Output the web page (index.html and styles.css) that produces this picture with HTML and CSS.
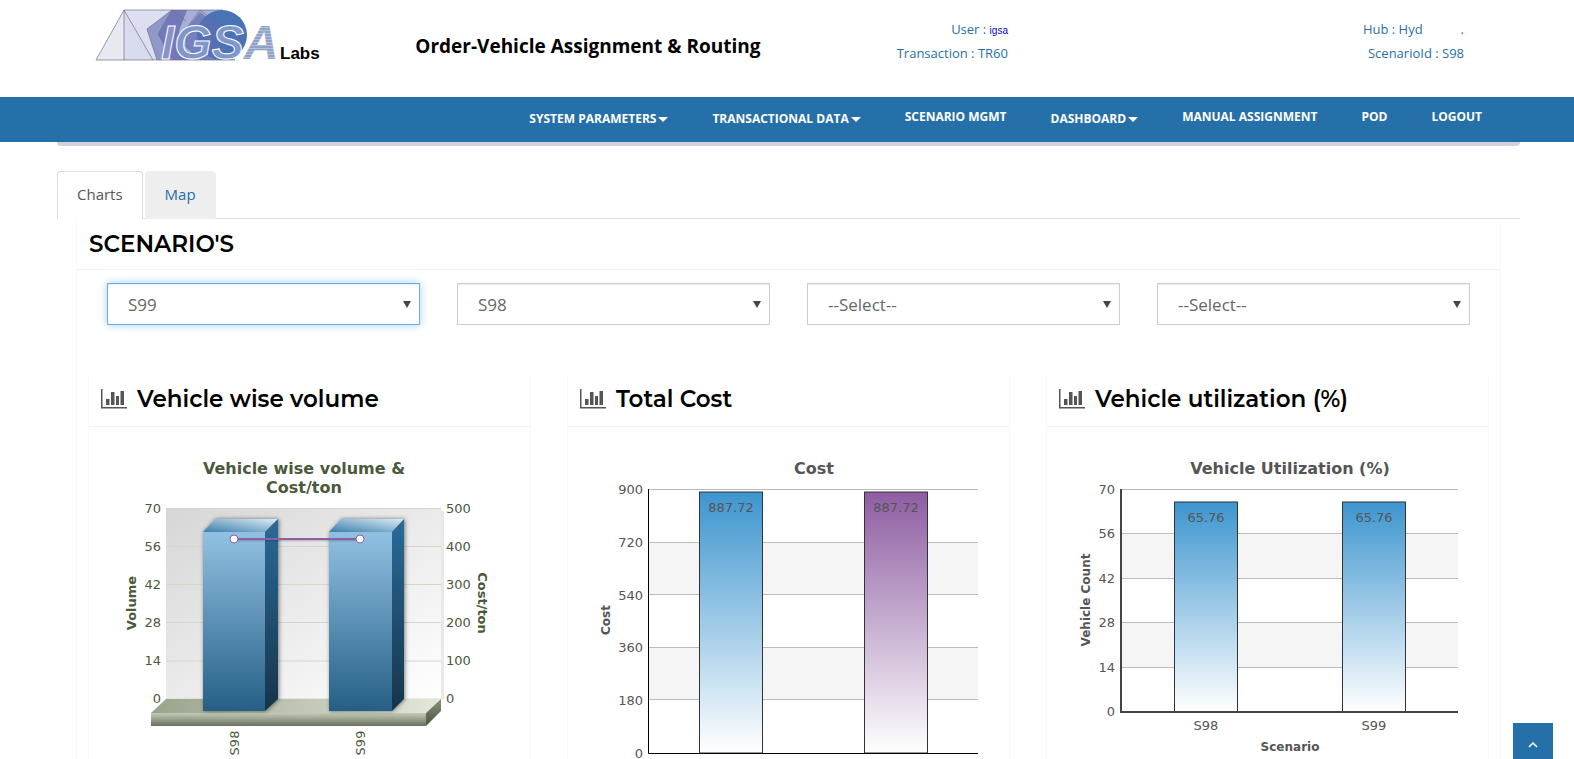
FILE: index.html
```html
<!DOCTYPE html>
<html lang="en">
<head>
    <meta charset="UTF-8">
    <meta name="viewport" content="width=device-width, initial-scale=1.0">
    <title>Order-Vehicle Assignment &amp; Routing</title>
    <link rel="stylesheet" href="styles.css">
</head>
<body>

    <!-- Header -->
    <header class="header">
        <a href="#" class="logo">
            <svg width="230" height="64" viewBox="0 0 230 64">
                <defs>
                    <pattern id="stripes" width="4" height="3" patternUnits="userSpaceOnUse">
                        <rect width="4" height="3" fill="#8fa3c6"/>
                        <rect width="4" height="1" fill="#b4c1d9"/>
                    </pattern>
                </defs>
                <path d="M29 1H128V51H29z" fill="#dddff0"/>
                <path d="M29 1L1 51H29z" fill="#e6e9f1"/>
                <path d="M29 1L58 51H29z" fill="#d8daed"/>
                <path d="M77 1L52 20L62 51H102L110 20z" fill="#8f98c9"/>
                <path d="M77 1H106L86 20L92 51H78L63 25z" fill="#7379b8"/>
                <path d="M92 1H128L140 20V51H92L84 22z" fill="#a9aed6"/>
                <circle cx="127" cy="26" r="25" fill="#4a73b5"/>
                <path d="M105 3L128 21L124 51H106L91 38V20z" fill="#5c6fb4" opacity=".7"/>
                <path d="M29 1V51M1 51L29 1L58 51M29 1H128M77 1L52 20L62 51M77 1L63 25L78 51M77 1L91 12M105 1L91 20V38L106 51M105 1L128 20V40L118 51M1 51H140" fill="none" stroke="#6d7186" stroke-width=".7"/>
                <text x="66" y="50" class="logo-name"><tspan fill="#8891c8">I</tspan><tspan fill="#8097cb">GS</tspan><tspan class="logo-stripe">A</tspan></text>
                <text x="185" y="50" class="logo-labs">Labs</text>
            </svg>
        </a>
        <h1 class="title">Order-Vehicle Assignment &amp; Routing</h1>
        <div class="info">
            <div>User : <span class="user-name">igsa</span></div>
            <div>Transaction : TR60</div>
        </div>
        <div class="info">
            <div>Hub : Hyd <span class="hub-rest">.</span></div>
            <div>ScenarioId : S98</div>
        </div>
    </header>

    <!-- Navigation -->
    <nav class="navbar">
        <a href="#" class="dropdown">System Parameters<span class="caret"></span></a>
        <a href="#" class="dropdown">Transactional Data<span class="caret"></span></a>
        <a href="#">Scenario Mgmt</a>
        <a href="#" class="dropdown">Dashboard<span class="caret"></span></a>
        <a href="#">Manual Assignment</a>
        <a href="#">POD</a>
        <a href="#">Logout</a>
    </nav>

    <main class="container">
        <div class="strip"></div>

        <div class="tabs">
            <a href="#" class="tab active">Charts</a>
            <a href="#" class="tab">Map</a>
        </div>

        <section class="panel">
            <h2 class="panel-title" id="scenarios">SCENARIO'S</h2>

            <div class="selects">
                <div class="select-box">
                    <select class="selected" aria-labelledby="scenarios"><option>S99</option></select>
                </div>
                <div class="select-box">
                    <select aria-labelledby="scenarios"><option>S98</option></select>
                </div>
                <div class="select-box">
                    <select aria-labelledby="scenarios"><option>--Select--</option></select>
                </div>
                <div class="select-box">
                    <select aria-labelledby="scenarios"><option>--Select--</option></select>
                </div>
            </div>

            <div class="cards">
                <!-- Volume chart -->
                <article class="card">
                    <h3 class="card-title">
                        <svg class="icon" width="26" height="20" viewBox="0 0 26 20"><path d="M0 0h1.500v18H26v1.500H0zM5 10h3.500v6H5zM10 3h3.500v13H10zM15 7h3v9h-3zM19.500 2h3.500v14h-3.500z"/></svg>
                        Vehicle wise volume
                    </h3>
                    <svg class="chart green" viewBox="0 0 441 332">
                        <defs>
                            <linearGradient id="wall" x1="0" y1="0" x2="1" y2="1">
                                <stop offset="0" stop-color="#d6d6d6"/>
                                <stop offset="1" stop-color="#fff"/>
                            </linearGradient>
                            <linearGradient id="front" x1="0" y1="0" x2="0" y2="1">
                                <stop offset="0" stop-color="#91c1e2"/>
                                <stop offset="1" stop-color="#265f86"/>
                            </linearGradient>
                            <linearGradient id="side" x1="0" y1="0" x2="0" y2="1">
                                <stop offset="0" stop-color="#2a6b98"/>
                                <stop offset="1" stop-color="#17344a"/>
                            </linearGradient>
                            <linearGradient id="top" x1="0" y1="1" x2="1" y2="0">
                                <stop offset="0" stop-color="#3a7da8"/>
                                <stop offset="1" stop-color="#dcedf9"/>
                            </linearGradient>
                            <linearGradient id="floor" x1="0" y1="0" x2="1" y2="0">
                                <stop offset="0" stop-color="#9aa38c"/>
                                <stop offset="1" stop-color="#e3e8dd"/>
                            </linearGradient>
                            <linearGradient id="floorFront" x1="0" y1="0" x2="0" y2="1">
                                <stop offset="0" stop-color="#c3cab8"/>
                                <stop offset="1" stop-color="#697260"/>
                            </linearGradient>
                            <linearGradient id="floorSide" x1="0" y1="0" x2="0" y2="1">
                                <stop offset="0" stop-color="#8a9479"/>
                                <stop offset="1" stop-color="#4b5242"/>
                            </linearGradient>
                            <filter id="shadow" x="-20%" y="-10%" width="150%" height="120%">
                                <feDropShadow dx="1" dy="0" stdDeviation="2" flood-opacity=".5"/>
                            </filter>
                        </defs>
                        <text class="chart-title" x="215" y="47">Vehicle wise volume &amp;</text>
                        <text class="chart-title" x="215" y="66">Cost/ton</text>

                        <path d="M351 81l4 4v187h-4z" fill="#e9e9e9"/>
                        <rect x="77" y="81" width="275" height="191" fill="url(#wall)"/>
                        <path d="M77 81.500H352M77 119.500H352M77 157.500H352M77 195.500H352M77 234H352M77 272H352" stroke="#d3d8c6" fill="none"/>
                        <path d="M62 286L77 272H352L337 286z" fill="url(#floor)"/>
                        <path d="M337 286L352 272V284L337 299z" fill="url(#floorSide)"/>
                        <rect x="62" y="286" width="275" height="13" fill="url(#floorFront)"/>

                        <g filter="url(#shadow)">
                            <path d="M114 105L126 92H189L176 105z" fill="url(#top)"/>
                            <path d="M176 105L189 92V272L176 284z" fill="url(#side)"/>
                            <rect x="114" y="105" width="62" height="179" fill="url(#front)"/>
                        </g>
                        <g filter="url(#shadow)">
                            <path d="M240 105L252 92H315L303 105z" fill="url(#top)"/>
                            <path d="M303 105L315 92V272L303 284z" fill="url(#side)"/>
                            <rect x="240" y="105" width="63" height="179" fill="url(#front)"/>
                        </g>
                        <path d="M145 113H271" stroke="#000" stroke-opacity=".15" stroke-width="3"/>
                        <path d="M145 112H271" stroke="#8e5da2" stroke-width="2"/>
                        <circle cx="145" cy="112" r="4" fill="#fff" stroke="#8e5da2"/>
                        <circle cx="271" cy="112" r="4" fill="#fff" stroke="#8e5da2"/>

                        <g class="labels-end">
                            <text x="72" y="86">70</text>
                            <text x="72" y="124">56</text>
                            <text x="72" y="162">42</text>
                            <text x="72" y="200">28</text>
                            <text x="72" y="238">14</text>
                            <text x="72" y="276">0</text>
                        </g>
                        <g>
                            <text x="357" y="86">500</text>
                            <text x="357" y="124">400</text>
                            <text x="357" y="162">300</text>
                            <text x="357" y="200">200</text>
                            <text x="357" y="238">100</text>
                            <text x="357" y="276">0</text>
                        </g>
                        <text class="axis-title" transform="translate(47 176) rotate(-90)">Volume</text>
                        <text class="axis-title" transform="translate(389 176) rotate(90)">Cost/ton</text>
                        <text class="label-mid" transform="translate(150 316) rotate(-90)">S98</text>
                        <text class="label-mid" transform="translate(276 316) rotate(-90)">S99</text>
                    </svg>
                </article>

                <!-- Cost chart -->
                <article class="card">
                    <h3 class="card-title">
                        <svg class="icon" width="26" height="20" viewBox="0 0 26 20"><path d="M0 0h1.500v18H26v1.500H0zM5 10h3.500v6H5zM10 3h3.500v13H10zM15 7h3v9h-3zM19.500 2h3.500v14h-3.500z"/></svg>
                        Total Cost
                    </h3>
                    <svg class="chart" viewBox="0 0 441 332">
                        <defs>
                            <linearGradient id="blue" x1="0" y1="0" x2="0" y2="1">
                                <stop offset="0" stop-color="#3d95cf"/>
                                <stop offset="1" stop-color="#fff"/>
                            </linearGradient>
                            <linearGradient id="purple" x1="0" y1="0" x2="0" y2="1">
                                <stop offset="0" stop-color="#8e5da2"/>
                                <stop offset="1" stop-color="#fff"/>
                            </linearGradient>
                        </defs>
                        <text class="chart-title" x="246" y="47">Cost</text>
                        <path d="M80 115H410V168H80zM80 220H410V273H80z" fill="#f5f5f5"/>
                        <path d="M80 62.500H410M80 115.500H410M80 167.500H410M80 220.500H410M80 272.500H410" stroke="#bbb" fill="none"/>
                        <rect x="131.500" y="65" width="63" height="261" fill="url(#blue)" stroke="#333"/>
                        <rect x="296.500" y="65" width="63" height="261" fill="url(#purple)" stroke="#333"/>
                        <path d="M80.500 62V326.500H410" stroke="#000" fill="none"/>
                        <g class="labels-end">
                            <text x="75" y="67">900</text>
                            <text x="75" y="120">720</text>
                            <text x="75" y="173">540</text>
                            <text x="75" y="225">360</text>
                            <text x="75" y="278">180</text>
                            <text x="75" y="331">0</text>
                        </g>
                        <text class="label-mid" x="163" y="85">887.72</text>
                        <text class="label-mid" x="328" y="85">887.72</text>
                        <text class="axis-title" transform="translate(42 193) rotate(-90)">Cost</text>
                    </svg>
                </article>

                <!-- Utilization chart -->
                <article class="card">
                    <h3 class="card-title">
                        <svg class="icon" width="26" height="20" viewBox="0 0 26 20"><path d="M0 0h1.500v18H26v1.500H0zM5 10h3.500v6H5zM10 3h3.500v13H10zM15 7h3v9h-3zM19.500 2h3.500v14h-3.500z"/></svg>
                        Vehicle utilization (%)
                    </h3>
                    <svg class="chart" viewBox="0 0 441 332">
                        <text class="chart-title" x="243" y="47">Vehicle Utilization (%)</text>
                        <path d="M74 106H411V151H74zM74 195H411V240H74z" fill="#f5f5f5"/>
                        <path d="M74 62.500H411M74 106.500H411M74 151.500H411M74 195.500H411M74 240.500H411" stroke="#bbb" fill="none"/>
                        <rect x="127.500" y="75" width="63" height="210" fill="url(#blue)" stroke="#333"/>
                        <rect x="295.500" y="75" width="63" height="210" fill="url(#blue)" stroke="#333"/>
                        <path d="M74 62V285H411" stroke="#444" stroke-width="2" fill="none"/>
                        <g class="labels-end">
                            <text x="68" y="67">70</text>
                            <text x="68" y="111">56</text>
                            <text x="68" y="156">42</text>
                            <text x="68" y="200">28</text>
                            <text x="68" y="245">14</text>
                            <text x="68" y="289">0</text>
                        </g>
                        <text class="label-mid" x="159" y="95">65.76</text>
                        <text class="label-mid" x="327" y="95">65.76</text>
                        <text class="label-mid" x="159" y="303">S98</text>
                        <text class="label-mid" x="327" y="303">S99</text>
                        <text class="axis-title" x="243" y="324">Scenario</text>
                        <text class="axis-title" transform="translate(43 173) rotate(-90)">Vehicle Count</text>
                    </svg>
                </article>
            </div>
        </section>
    </main>

    <button type="button" class="to-top" aria-label="Back to top">
        <svg width="10" height="6" viewBox="0 0 10 6"><path d="M1 5l4-4 4 4" fill="none" stroke="#fff" stroke-width="1.500"/></svg>
    </button>

</body>
</html>
```

FILE: styles.css
```css
/* General Styles */
* {
    box-sizing: border-box;
}

body {
    margin: 0;
    font-family: 'Open Sans', sans-serif;
    font-size: 16px;
    color: #555;
    background: #fff;
}

a {
    color: #2570a8;
    text-decoration: none;
}

h1, h2, h3 {
    margin: 0;
    color: #000;
}

/* Header */
.header {
    display: grid;
    grid-template-columns: 321fr 343fr 248fr 457fr;
    height: 97px;
    padding: 0 110px 0 95px;
}

.logo {
    padding-top: 9px;
}

.logo svg {
    display: block;
}

.logo-name {
    font: italic bold 48px 'Liberation Sans', sans-serif;
    stroke: #fff;
    stroke-width: 1px;
}

.logo-stripe {
    fill: url(#stripes);
    stroke: none;
}

.logo-labs {
    font: bold 17px 'Liberation Sans', sans-serif;
    fill: #000;
}

.title {
    padding-top: 32px;
    font-size: 19px;
    font-weight: 700;
    line-height: 28px;
    white-space: nowrap;
}

.info {
    padding-top: 17px;
    font-size: 13px;
    line-height: 24px;
    text-align: right;
    color: #2570a8;
    white-space: nowrap;
}

.user-name {
    font-family: 'Liberation Sans', sans-serif;
    font-size: 10px;
    line-height: 1;
    color: #00c;
}

.hub-rest {
    display: inline-block;
    width: 38px;
}

/* Navigation */
.navbar {
    display: flex;
    justify-content: flex-end;
    gap: 44px;
    height: 45px;
    padding: 9px 92px 0 0;
    background: #2570a8;
}

.navbar a {
    color: #fff;
    font-size: 12px;
    font-weight: 700;
    line-height: 22px;
    text-transform: uppercase;
    white-space: nowrap;
}

.navbar .dropdown {
    line-height: 26px;
}

.caret {
    display: inline-block;
    margin-left: 2px;
    vertical-align: 1px;
    border-top: 5px solid #fff;
    border-left: 5px solid transparent;
    border-right: 5px solid transparent;
}

/* Content */
.container {
    margin: 0 54px 0 57px;
}

.strip {
    height: 4px;
    border-radius: 0 0 4px 4px;
    background: #d0d3de;
}

.tabs {
    display: flex;
    gap: 2px;
    margin-top: 25px;
    border-bottom: 1px solid #ddd;
}

.tab {
    margin-bottom: -1px;
    padding: 11px 19px 12px;
    border: 1px solid #eee;
    border-radius: 4px 4px 0 0;
    background: #eee;
    font-size: 15px;
    line-height: 23px;
}

.tab.active {
    border-color: #ddd #ddd #fff;
    background: #fff;
    color: #555;
}

.panel {
    margin: 0 19px;
    border-left: 1px solid #f9f9f9;
    border-right: 1px solid #f9f9f9;
}

.panel-title {
    padding: 11px 12px;
    border-bottom: 1px solid #f2f2f2;
    font-family: 'Montserrat', 'Inter', sans-serif;
    font-size: 23px;
    font-weight: 600;
    line-height: 28px;
}

.selects {
    display: grid;
    grid-template-columns: repeat(4, 1fr);
    gap: 37px;
    padding: 13px 30px 0;
}

.select-box {
    position: relative;
}

.select-box::after {
    content: "";
    position: absolute;
    right: 9px;
    top: 18px;
    border-top: 7px solid #444;
    border-left: 4px solid transparent;
    border-right: 4px solid transparent;
    pointer-events: none;
}

select {
    display: block;
    width: 100%;
    height: 42px;
    padding: 0 20px;
    border: 1px solid #ccc;
    border-radius: 0;
    background: #fff;
    box-shadow: inset 0 1px 1px rgba(0, 0, 0, 0.075);
    color: #666;
    font-family: inherit;
    font-size: 17px;
    appearance: none;
}

select.selected,
select:focus {
    border-color: #66afe9;
    outline: 0;
    box-shadow: inset 0 1px 1px rgba(0, 0, 0, 0.075), 0 0 8px rgba(102, 175, 233, 0.6);
}

/* Chart cards */
.cards {
    display: grid;
    grid-template-columns: repeat(3, 1fr);
    gap: 38px;
    padding: 51px 12px 0;
}

.card {
    box-shadow: -1px 0 #f9f9f9, 1px 0 #f9f9f9;
}

.card-title {
    display: flex;
    align-items: center;
    gap: 10px;
    height: 51px;
    padding: 0 12px 4px;
    border-bottom: 1px solid #f2f2f2;
    font-family: 'Montserrat', 'Inter', sans-serif;
    font-size: 23px;
    font-weight: 600;
    white-space: nowrap;
}

.icon {
    fill: #555;
}

.chart {
    display: block;
    width: 100%;
    overflow: visible;
    font-family: Verdana, 'DejaVu Sans', sans-serif;
    font-size: 13px;
    fill: #555;
}

.chart.green {
    fill: #4a593a;
}

.chart-title {
    font-size: 16px;
    font-weight: bold;
    text-anchor: middle;
}

.axis-title {
    font-size: 12px;
    font-weight: bold;
    text-anchor: middle;
}

.green .axis-title {
    font-size: 13px;
}

.labels-end {
    text-anchor: end;
}

.label-mid {
    text-anchor: middle;
}

/* Back to top */
.to-top {
    position: fixed;
    right: 21px;
    bottom: 0;
    width: 40px;
    height: 36px;
    padding: 4px 0 0;
    border: 0;
    background: #2570a8;
    cursor: pointer;
}
```
